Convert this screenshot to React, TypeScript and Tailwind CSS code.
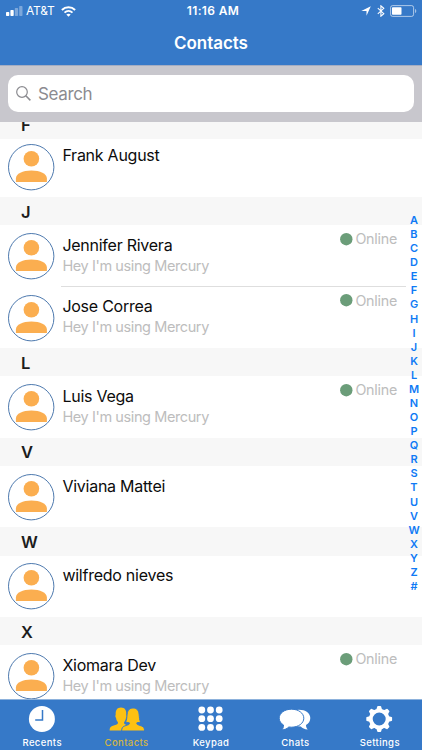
import React from "react";

type Contact = { name: string; online?: boolean };
type Section = { letter: string; contacts: Contact[] };

const sections: Section[] = [
  {
    letter: "J",
    contacts: [
      { name: "Jennifer Rivera", online: true },
      { name: "Jose Correa", online: true },
    ],
  },
  { letter: "L", contacts: [{ name: "Luis Vega", online: true }] },
  { letter: "V", contacts: [{ name: "Viviana Mattei" }] },
  { letter: "W", contacts: [{ name: "wilfredo nieves" }] },
  { letter: "X", contacts: [{ name: "Xiomara Dev", online: true }] },
];

const indexLetters = "ABCDEFGHIJKLMNOPQRSTUVWXYZ#".split("");

function Avatar() {
  return (
    <svg className="h-[47px] w-[47px] shrink-0" viewBox="0 0 47 47">
      <circle cx="23.2" cy="23.2" r="22.7" fill="#fff" stroke="#4d79ae" strokeWidth="1" />
      <circle cx="23.4" cy="14.7" r="7.8" fill="#fbae50" />
      <path d="M7.9 38v-3.6c0-5 6.8-8 15.5-8s15.5 3 15.5 8V38z" fill="#fbae50" />
    </svg>
  );
}

function SectionHeader({ letter }: { letter: string }) {
  return (
    <div className="flex h-[28.3px] shrink-0 items-center bg-[#f7f7f7] pl-[21px] pt-[1px] text-[16.5px] font-semibold leading-[20px] text-[#1c1c1c]">
      {letter}
    </div>
  );
}

function ContactRow({ contact, divider }: { contact: Contact; divider?: boolean }) {
  return (
    <div className="flex h-[61.35px] shrink-0 pl-[7.7px]">
      <div className="pt-[7.7px]">
        <Avatar />
      </div>
      <div
        className={
          "ml-[6.3px] mr-[16px] flex flex-1 justify-between border-b " +
          (divider ? "border-[#dedede]" : "border-transparent")
        }
      >
        <div className="pl-[1.4px] pt-[9.6px]">
          <div className="h-[20px] whitespace-nowrap text-[16px] leading-[20px] tracking-[-0.25px] text-[#0c0c0c]">
            {contact.name}
          </div>
          {contact.online && (
            <div className="mt-[1px] whitespace-nowrap text-[14.5px] leading-[20px] tracking-[-0.4px] text-[#bdbdbd]">
              Hey I'm using Mercury
            </div>
          )}
        </div>
        {contact.online && (
          <div className="mr-[9px] mt-[4px] flex h-[20px] items-center gap-[2px]">
            <svg className="h-[13px] w-[13px] shrink-0" viewBox="0 0 13 13">
              <circle cx="6.3" cy="6.2" r="6.2" fill="#6b9d79" />
            </svg>
            <span className="text-[14.3px] leading-[20px] tracking-[-0.25px] text-[#bdbdbd]">Online</span>
          </div>
        )}
      </div>
    </div>
  );
}

function StatusBar() {
  return (
    <div className="flex h-[22px] items-center px-[6px] text-white">
      <div className="flex flex-1 items-center">
        <svg className="h-[10px] w-[17px]" viewBox="0 0 17 10">
          <rect x="0" y="6" width="3.3" height="4" rx=".7" fill="#fff" />
          <rect x="4.4" y="4" width="3.3" height="6" rx=".7" fill="#fff" />
          <rect x="8.8" y="2" width="3.3" height="8" rx=".7" fill="#fff" opacity=".35" />
          <rect x="13.2" y="0" width="3.3" height="10" rx=".7" fill="#fff" opacity=".35" />
        </svg>
        <span className="ml-[3px] text-[12px] leading-[16px] tracking-[-0.2px]">AT&amp;T</span>
        <svg className="ml-[6px] h-[11px] w-[15px]" viewBox="0 0 15 11" fill="none" stroke="#fff">
          <path d="M.9 4C4.6.3 10.4.3 14.1 4" strokeWidth="2" />
          <path d="M3.5 6.6c2.3-2.2 5.700-2.200 8 0" strokeWidth="1.8" />
          <path d="M7.5 10.8 5.3 8.5c1.3-1.1 3.1-1.1 4.4 0z" fill="#fff" stroke="none" />
        </svg>
      </div>
      <span className="pl-[4px] text-[12px] font-semibold leading-[16px] tracking-[0.35px]">11:16 AM</span>
      <div className="flex flex-1 items-center justify-end">
        <svg className="h-[10px] w-[10px]" viewBox="0 0 10 10">
          <path d="M9.8.2 5.5 9.8V4.9H.3z" fill="#fff" />
        </svg>
        <svg className="ml-[6px] h-[12px] w-[8px]" viewBox="0 0 8 12" fill="none" stroke="#fff" strokeWidth="1.1">
          <path d="M.8 3.2 6.8 8.7 3.9 11.2V.8l2.9 2.5L.8 8.8" />
        </svg>
        <svg className="-mr-[1px] ml-[5px] h-[12px] w-[27px]" viewBox="0 0 27 12">
          <rect x=".6" y=".6" width="23" height="10.8" rx="2" fill="none" stroke="#fff" strokeOpacity=".6" strokeWidth="1" />
          <rect x="2" y="2.2" width="9.5" height="7.6" rx=".7" fill="#fff" />
          <path d="M25 4v4c1.7-.5 1.7-3.5 0-4z" fill="#fff" opacity=".55" />
        </svg>
      </div>
    </div>
  );
}

function ClockIcon() {
  return (
    <svg className="h-[28px] w-[36px]" viewBox="0 0 36 28">
      <circle cx="17.9" cy="14" r="13" fill="#fff" />
      <path d="M18.5 5v10h-7.3" fill="none" stroke="#3679c8" strokeWidth="1.5" />
    </svg>
  );
}

function PeopleIcon() {
  return (
    <svg className="h-[28px] w-[36px]" viewBox="0 0 36 28" fill="#fdc112">
      <path d="M.6 25.500c.1-2.800.7-3.600 2.600-4.400l4.500-1.700c1.100-.5 1.500-1.300 1.100-2.400-1.200-1.500-1.600-2.500-1.700-4-.8-.6-1-2.500-.4-3C6.300 5.300 8.200 2.600 12 2.600s5.700 2.700 5.300 7.400c.6.500.4 2.400-.4 3-.1 1.500-.5 2.500-1.700 4-.4 1.100 0 1.900 1.100 2.400l2.700 1v5.100z" />
      <path
        d="M12.600 26c.1-3 .9-4.100 2.800-4.900l4.100-1.500c.9-.4 1.100-1 .8-1.800-1.600-.1-2.900-.5-3.700-1.100 1.300-1.800 1.100-4.400 1.500-7.700.5-3.900 2.600-6 6-6s5.500 2.100 6 6c.4 3.300.2 5.900 1.500 7.700-.8.600-2.100 1-3.700 1.100-.3.800-.1 1.400.8 1.800l4.100 1.500c1.900.8 2.700 1.900 2.800 4.900z"
        stroke="#3679c8"
        strokeWidth="1"
      />
    </svg>
  );
}

function KeypadIcon() {
  const steps = [0, 1, 2];
  return (
    <svg className="h-[28px] w-[36px]" viewBox="0 0 36 28" fill="#fff">
      {steps.map((r) =>
        steps.map((c) => <circle key={`${r}-${c}`} cx={8.8 + c * 8.7} cy={5 + r * 8.7} r="3.4" />)
      )}
    </svg>
  );
}

function ChatsIcon() {
  return (
    <svg className="h-[28px] w-[36px]" viewBox="0 0 36 28" fill="#fff">
      <path d="M22 4.800c6.600 0 11.300 3.300 11.300 8.300 0 3.300-1.700 5.500-4.300 7 0 1.900.6 3 1.700 4.400-3.200-.3-5.200-1.300-6.900-3-6.800.3-11.800-3.400-11.800-8.400S16 4.800 22 4.800z" />
      <path
        d="M14.500 4.200c6.900 0 12.300 3.900 12.300 9s-5.400 9-12.300 9c-1 0-1.800-.1-2.700-.2-1.900 1.800-4 2.700-6.900 2.900 1.200-1.500 1.700-2.900 1.600-4.900-2.600-1.600-4.300-4-4.300-6.800 0-5.100 5.400-9 12.300-9z"
        stroke="#3679c8"
        strokeWidth="1"
      />
    </svg>
  );
}

function GearIcon() {
  const teeth = [0, 45, 90, 135, 180, 225, 270, 315];
  return (
    <svg className="h-[28px] w-[36px]" viewBox="0 0 36 28">
      <circle cx="17.2" cy="14" r="8.4" fill="none" stroke="#fff" strokeWidth="3.8" />
      {teeth.map((a) => (
        <path key={a} d="M14.1 5.2 15.2 1.7q.2-.6.8-.6h2.4q.6 0 .8.6l1.100 3.500z" fill="#fff" transform={`rotate(${a} 17.2 14)`} />
      ))}
    </svg>
  );
}

const tabs = [
  { label: "Recents", icon: <ClockIcon /> },
  { label: "Contacts", icon: <PeopleIcon />, active: true },
  { label: "Keypad", icon: <KeypadIcon /> },
  { label: "Chats", icon: <ChatsIcon /> },
  { label: "Settings", icon: <GearIcon /> },
];

export default function App() {
  return (
    <div className="relative flex h-[750px] w-[422px] flex-col overflow-hidden bg-white font-['Inter','Liberation_Sans',sans-serif]">
      <header className="h-[65px] shrink-0 bg-[#3679c8]">
        <StatusBar />
        <h1 className="pt-[10px] text-center text-[17px] font-semibold leading-[22px] tracking-[-0.05px] text-white">
          Contacts
        </h1>
      </header>

      <div className="h-[57px] shrink-0 border-t border-[#a4adc2] bg-[#c8c7cd] px-[8px] pt-[9px]">
        <div className="flex h-[37px] items-center rounded-[10px] bg-white pl-[8px]">
          <svg className="h-[15px] w-[15px]" viewBox="0 0 15 15" fill="none" stroke="#8b8b90" strokeWidth="1.2">
            <circle cx="6" cy="6" r="5.3" />
            <path d="m9.8 9.8 4.6 4.6" strokeWidth="1.5" />
          </svg>
          <span className="ml-[7px] text-[17px] leading-[22px] tracking-[-0.35px] text-[#8b8b90]">Search</span>
        </div>
      </div>

      <main className="flex min-h-0 flex-1 flex-col overflow-hidden">
        <div className="flex h-[16.5px] shrink-0 flex-col justify-end overflow-hidden">
          <SectionHeader letter="F" />
        </div>
        <div className="flex h-[58.7px] shrink-0 flex-col justify-end">
          <ContactRow contact={{ name: "Frank August" }} />
        </div>
        {sections.map((s) => (
          <section key={s.letter} className="shrink-0">
            <SectionHeader letter={s.letter} />
            {s.contacts.map((c, i) => (
              <ContactRow key={c.name} contact={c} divider={i < s.contacts.length - 1} />
            ))}
          </section>
        ))}
      </main>

      <nav className="grid h-[51px] shrink-0 grid-cols-5 border-t border-[#8db2dc] bg-[#3679c8]">
        {tabs.map((t) => (
          <div
            key={t.label}
            className={"flex flex-col items-center pt-[5px] " + (t.active ? "text-[#d3b545]" : "text-white")}
          >
            {t.icon}
            <span className="mt-[4px] text-[9.5px] font-medium leading-[12px] tracking-[0.4px]">{t.label}</span>
          </div>
        ))}
      </nav>

      <div className="absolute right-[1px] top-[213px] flex w-[14px] flex-col items-center text-[11px] font-semibold text-[#0f7af5]">
        {indexLetters.map((l) => (
          <span key={l} className="h-[14.08px] leading-[14px]">
            {l}
          </span>
        ))}
      </div>
    </div>
  );
}
